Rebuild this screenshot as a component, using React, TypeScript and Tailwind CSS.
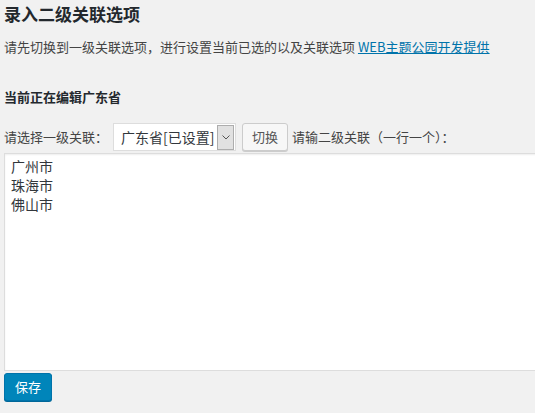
export default function App() {
  return (
    <div
      className="min-h-[413px] w-full overflow-hidden bg-[#f1f1f1] px-[4px] text-[13px] text-[#444]"
      style={{ fontFamily: '"Noto Sans CJK SC", "Noto Sans", sans-serif' }}
    >
      <h2 className="m-0 text-[17px] font-bold leading-[28px] text-[#23282d]">录入二级关联选项</h2>

      <p className="mt-[9px] leading-[20px]">
        请先切换到一级关联选项，进行设置当前已选的以及关联选项{' '}
        <a href="#" className="text-[#0073aa] underline">
          WEB主题公园开发提供
        </a>
      </p>

      <h3 className="mt-[30px] text-[13px] font-bold leading-[20px] text-[#23282d]">当前正在编辑广东省</h3>

      <div className="mt-[16px] flex h-[28px] items-center whitespace-nowrap">
        <span>请选择一级关联：</span>
        <div className="ml-[5px] flex h-[28px] w-[123px] items-center border border-[#ddd] bg-white pl-[7px] pr-[1px] text-[14px] text-[#32373c]">
          <span className="flex-1">广东省[已设置]</span>
          <span className="flex h-[25px] w-[17px] items-center justify-center border border-[#adadad] bg-[#e1e1e1]">
            <svg width="8" height="5" viewBox="0 0 8 5" fill="none">
              <path d="M0.5 0.5 L4 4 L7.5 0.5" stroke="#555" strokeWidth="1" />
            </svg>
          </span>
        </div>
        <button className="ml-[6px] h-[28px] rounded-[3px] border border-[#ccc] bg-[#f7f7f7] px-[9px] text-[13px] text-[#555] shadow-[0_1px_0_#ccc]">
          切换
        </button>
        <span className="ml-[4px]">请输二级关联（一行一个）：</span>
      </div>

      <textarea
        className="mt-[2px] block h-[218px] w-[580px] resize-none border border-[#ddd] bg-white px-[6px] py-[3px] text-[14px] leading-[19px] text-[#32373c] shadow-[inset_0_1px_2px_rgba(0,0,0,0.07)] outline-none"
        defaultValue={'广州市\n珠海市\n佛山市'}
      />

      <button className="mt-[2px] h-[28px] rounded-[3px] border border-[#0073aa] bg-[#0085ba] px-[10px] text-[13px] text-white shadow-[0_1px_0_#006799]">
        保存
      </button>
    </div>
  );
}
